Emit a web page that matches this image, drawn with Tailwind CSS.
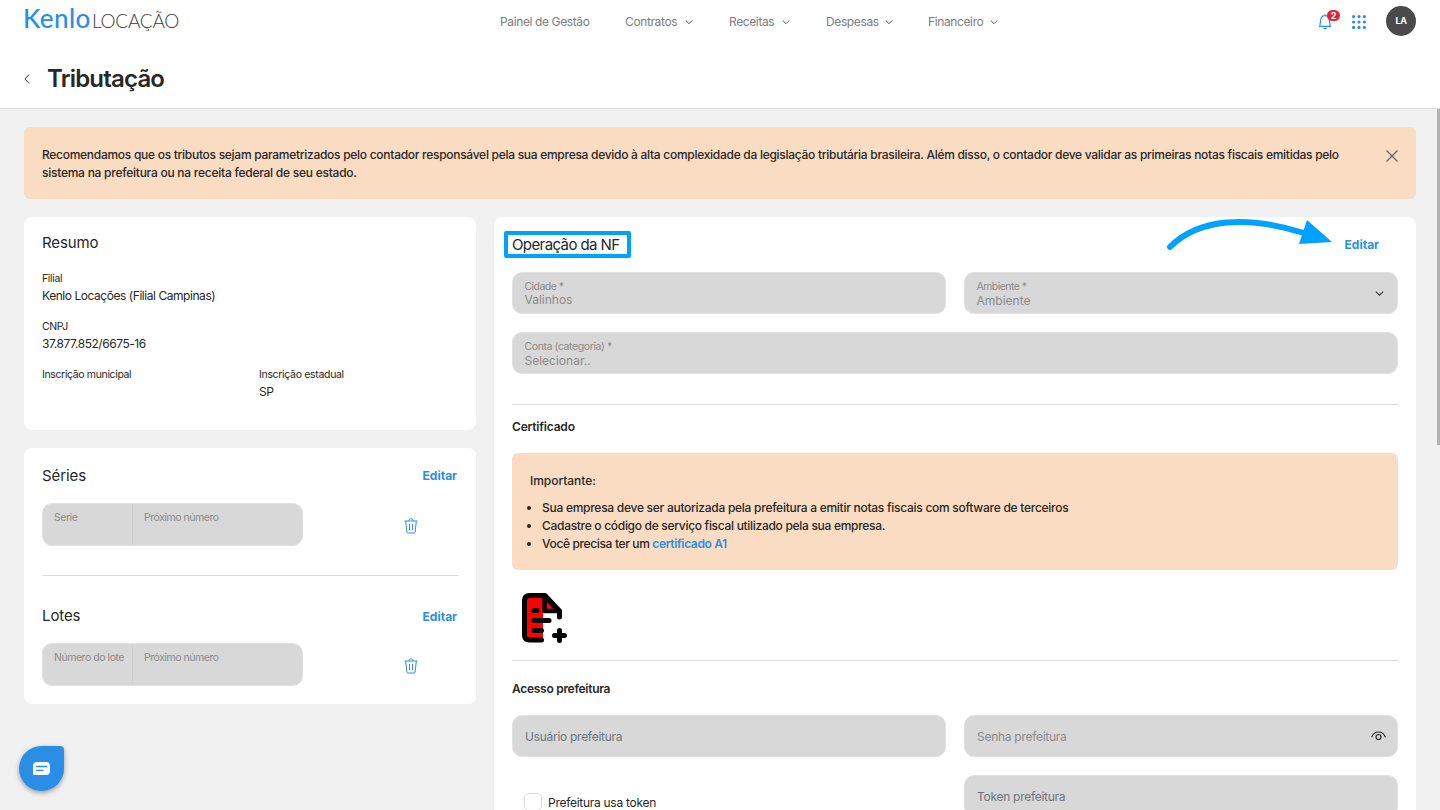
<!DOCTYPE html>
<html lang="pt-BR">
<head>
    <meta charset="UTF-8">
    <meta name="viewport" content="width=device-width, initial-scale=1.0">
    <title>Tributação - Kenlo Locação</title>
    <script src="https://cdn.jsdelivr.net/npm/@tailwindcss/browser@4"></script>
</head>
<body class="h-screen overflow-hidden bg-[#f1f1f1] font-['Inter',sans-serif] text-xs text-[#272727] whitespace-nowrap">

    <header class="h-[109px] bg-white border-b border-[#dfdfdf]">
        <div class="h-[43px] px-6 flex items-center">
            <div class="w-[476px] pb-[7px] flex items-baseline leading-none">
                <span class="w-[69px] -ml-px font-['Lato',sans-serif] font-medium text-[26px] tracking-[0.4px] text-[#2a8ee6]">Kenlo</span>
                <span class="font-['Lato',sans-serif] font-light text-[19px] tracking-[-0.25px] text-[#3c3c3c]">LOCAÇÃO</span>
            </div>
            <nav class="flex items-center text-[#7d7d7d] tracking-[-0.38px]">
                <a class="w-[125px]">Painel de Gestão</a>
                <a class="w-[104px] flex items-center gap-[8px]">Contratos
                    <svg class="w-2 h-2" viewBox="0 0 8 8" fill="none" stroke="#555" stroke-width="1"><path d="M.8 2.5 4 5.7 7.2 2.5"/></svg>
                </a>
                <a class="w-[97px] flex items-center gap-[8px]">Receitas
                    <svg class="w-2 h-2" viewBox="0 0 8 8" fill="none" stroke="#555" stroke-width="1"><path d="M.8 2.5 4 5.7 7.2 2.5"/></svg>
                </a>
                <a class="w-[102px] flex items-center gap-[6px]">Despesas
                    <svg class="w-2 h-2" viewBox="0 0 8 8" fill="none" stroke="#555" stroke-width="1"><path d="M.8 2.5 4 5.7 7.2 2.5"/></svg>
                </a>
                <a class="flex items-center gap-[7px]">Financeiro
                    <svg class="w-2 h-2" viewBox="0 0 8 8" fill="none" stroke="#555" stroke-width="1"><path d="M.8 2.5 4 5.7 7.2 2.5"/></svg>
                </a>
            </nav>
            <div class="ml-auto flex items-center">
                <div class="relative mr-[20px]">
                    <svg class="w-[14px] h-4" viewBox="0 0 14 16" fill="none" stroke="#2a8ee6" stroke-width="1.1"><path d="M.8 12.4h12.4M2 12.2V10c.6-1 .6-2 .6-3.8C2.6 3.3 4.3 1.6 7 1.6s4.4 1.7 4.4 4.6c0 1.8 0 2.8.6 3.8v2.2M7 .3v1.3"/><path d="M5 13.8h4c-.3 1-1 1.7-2 1.7s-1.7-.7-2-1.7z" fill="#2a8ee6" stroke="none"/></svg>
                    <span class="absolute -top-[4px] left-[9px] w-[13px] h-[11px] rounded-full bg-[#d9263a] text-white text-[9px] leading-[11px] font-bold text-center">2</span>
                </div>
                <svg class="w-[14px] h-[14px] mr-[20px]" viewBox="0 0 14 14" fill="#2a8ee6"><circle cx="1.6" cy="1.6" r="1.6"/><circle cx="7" cy="1.6" r="1.6"/><circle cx="12.4" cy="1.6" r="1.6"/><circle cx="1.6" cy="7" r="1.6"/><circle cx="7" cy="7" r="1.6"/><circle cx="12.4" cy="7" r="1.6"/><circle cx="1.6" cy="12.4" r="1.6"/><circle cx="7" cy="12.4" r="1.6"/><circle cx="12.4" cy="12.4" r="1.6"/></svg>
                <span class="w-[30px] h-[30px] -mt-px rounded-full bg-[#4a4a4a] text-white text-[9px] font-bold tracking-[-0.3px] flex items-center justify-center">LA</span>
            </div>
        </div>
        <div class="h-[71px] px-6 flex items-center">
            <svg class="w-[6px] h-[10px] mr-[17px]" viewBox="0 0 6 10" fill="none" stroke="#333" stroke-width="1"><path d="M5 .6 1 5l4 4.4"/></svg>
            <h1 class="text-2xl font-semibold tracking-[-0.8px]">Tributação</h1>
        </div>
    </header>

    <main class="px-6 pt-[18px]">
        <div class="h-[72px] px-[18px] pt-[19px] bg-[#fadcc3] rounded-md flex justify-between leading-[18px]">
            <p class="font-medium tracking-[-0.28px]">Recomendamos que os tributos sejam parametrizados pelo contador responsável pela sua empresa devido à alta complexidade da legislação tributária brasileira. Além disso, o contador deve validar as primeiras notas fiscais emitidas pelo<br><span class="tracking-[-0.25px]">sistema na prefeitura ou na receita federal de seu estado.</span></p>
            <svg class="w-3 h-3 mt-[3.5px]" viewBox="0 0 12 12" fill="none" stroke="#6b5f56" stroke-width="1.2"><path d="M.5.5l11 11M11.5.5l-11 11"/></svg>
        </div>

        <div class="mt-[18px] flex items-start gap-[18px]">
            <div class="w-[452px] flex flex-col gap-[18px]">
                <section class="h-[213px] px-[18px] pt-4 bg-white rounded-lg">
                    <h2 class="text-[15px] leading-5 tracking-[-0.1px]">Resumo</h2>
                    <dl class="mt-[17px] grid grid-cols-[217px_1fr] gap-y-[15px] leading-[15px] tracking-[-0.45px]">
                        <div class="col-span-2">
                            <dt class="text-[10.5px] leading-[18px] tracking-[-0.36px]">Filial</dt>
                            <dd>Kenlo Locações (Filial Campinas)</dd>
                        </div>
                        <div class="col-span-2">
                            <dt class="text-[10.5px] leading-[18px] tracking-[-0.36px]">CNPJ</dt>
                            <dd>37.877.852/6675-16</dd>
                        </div>
                        <div>
                            <dt class="text-[10.5px] leading-[18px] tracking-[-0.36px]">Inscrição municipal</dt>
                        </div>
                        <div>
                            <dt class="text-[10.5px] leading-[18px] tracking-[-0.32px]">Inscrição estadual</dt>
                            <dd>SP</dd>
                        </div>
                    </dl>
                </section>

                <section class="h-[256px] px-[18px] pt-[18px] bg-white rounded-lg">
                    <div class="flex justify-between items-center h-5">
                        <h2 class="text-[15px] tracking-[-0.1px]">Séries</h2>
                        <a class="font-bold text-[#2a8ee6] pr-px">Editar</a>
                    </div>
                    <div class="mt-[17px] flex items-center">
                        <div class="w-[261px] h-[43px] flex bg-[#d8d8d8] border border-[#e2e2e2] rounded-[10px] text-[10.5px] leading-[14px] text-[#8b8b8b] tracking-[-0.46px]">
                            <div class="w-[90px] pl-[11px] pt-[7px] border-r border-[#d0d0d0]">Serie</div>
                            <div class="pl-[11px] pt-[7px]">Próximo número</div>
                        </div>
                        <svg class="ml-[101px] mt-[3px] w-[14px] h-4" viewBox="0 0 14 16" fill="none" stroke="#2a8ee6" stroke-width="1"><path d="M.5 3h13M4.800 2.800c0-1.300.9-2 2.200-2s2.200.7 2.200 2M1.700 3.200 2.900 14c.1.700.5 1 1.100 1h6c.6 0 1-.3 1.100-1l1.200-10.800M5.500 6v6M8.500 6v6"/></svg>
                    </div>
                    <hr class="mt-[29px] border-[#dcdcdc]">
                    <div class="mt-[30px] flex justify-between items-center h-5">
                        <h2 class="text-[15px] tracking-[-0.1px]">Lotes</h2>
                        <a class="font-bold text-[#2a8ee6] pr-px pt-[2px]">Editar</a>
                    </div>
                    <div class="mt-[17px] flex items-center">
                        <div class="w-[261px] h-[43px] flex bg-[#d8d8d8] border border-[#e2e2e2] rounded-[10px] text-[10.5px] leading-[14px] text-[#8b8b8b] tracking-[-0.46px]">
                            <div class="w-[90px] pl-[11px] pt-[7px] border-r border-[#d0d0d0]">Número do lote</div>
                            <div class="pl-[11px] pt-[7px]">Próximo número</div>
                        </div>
                        <svg class="ml-[101px] mt-[3px] w-[14px] h-4" viewBox="0 0 14 16" fill="none" stroke="#2a8ee6" stroke-width="1"><path d="M.5 3h13M4.800 2.800c0-1.300.9-2 2.200-2s2.200.7 2.200 2M1.700 3.200 2.900 14c.1.700.5 1 1.100 1h6c.6 0 1-.3 1.100-1l1.200-10.800M5.500 6v6M8.500 6v6"/></svg>
                    </div>
                </section>
            </div>

            <section class="relative flex-1 px-[18px] pt-[18px] bg-white rounded-lg">
                <div class="flex justify-between items-center h-5">
                    <h2 class="text-[15px] tracking-[-0.6px]">Operação da NF</h2>
                    <a class="font-bold text-[#2a8ee6] pr-[19px]">Editar</a>
                </div>

                <!-- destaque e seta -->
                <div class="absolute left-[10px] top-[14px] w-[127px] h-[27px] border-4 border-[#00a2ff] rounded-[2px]"></div>
                <svg class="absolute left-[672px] top-0 w-[170px] h-[36px]" viewBox="0 0 170 36" fill="none"><path d="M4 30C33 1 82-1.500 138 16" stroke="#00a2ff" stroke-width="6" stroke-linecap="round"/><path d="M141 3l25 22-33 2z" fill="#00a2ff"/></svg>

                <div class="mt-[17px] grid grid-cols-2 gap-[18px] text-[#8b8b8b]">
                    <div class="h-[42px] px-[11.5px] pt-[7px] bg-[#d8d8d8] border border-[#e2e2e2] rounded-[10px] leading-[13px]">
                        <p class="text-[10.5px] tracking-[-0.55px]">Cidade *</p>
                        <p>Valinhos</p>
                    </div>
                    <div class="h-[42px] pl-[11.5px] pr-[13px] pt-px bg-[#d8d8d8] border border-[#e2e2e2] rounded-[10px] flex items-center justify-between leading-[14px]">
                        <div class="pt-px">
                            <p class="text-[10.5px] tracking-[-0.55px]">Ambiente *</p>
                            <p>Ambiente</p>
                        </div>
                        <svg class="w-[9px] h-[9px]" viewBox="0 0 9 9" fill="none" stroke="#333" stroke-width="1.1"><path d="M.8 2.6 4.5 6.2 8.2 2.6"/></svg>
                    </div>
                    <div class="col-span-2 h-[42px] px-[11.5px] pt-[7px] bg-[#d8d8d8] border border-[#e2e2e2] rounded-[10px] leading-[14px]">
                        <p class="text-[10.5px] tracking-[-0.4px]">Conta (categoria) *</p>
                        <p>Selecionar..</p>
                    </div>
                </div>

                <hr class="mt-[30px] border-[#dcdcdc]">
                <h3 class="mt-[13px] leading-[18px] font-semibold tracking-[-0.2px]">Certificado</h3>

                <div class="mt-[17.4px] h-[117px] px-[18px] pt-[18.6px] bg-[#fadcc3] rounded-md leading-[18px] font-medium tracking-[-0.27px]">
                    <p class="tracking-[-0.05px]">Importante:</p>
                    <ul class="mt-[9px] pl-3 list-disc">
                        <li>Sua empresa deve ser autorizada pela prefeitura a emitir notas fiscais com software de terceiros</li>
                        <li class="tracking-[-0.3px]">Cadastre o código de serviço fiscal utilizado pela sua empresa.</li>
                        <li class="tracking-[-0.36px]">Você precisa ter um <a class="font-semibold text-[#2a8ee6]">certificado A1</a></li>
                    </ul>
                </div>

                <svg class="mt-[22px] ml-[9px] w-[48px] h-[52px]" viewBox="0 0 48 52" fill="none" stroke="#000" stroke-width="5" stroke-linecap="round" stroke-linejoin="round">
                    <path d="M23 4H8Q3.500 4 3.500 9v34q0 5 4.500 5h14V25z" fill="red" stroke="none"/>
                    <path d="M23.500 4.500v14.500H38z" fill="red" stroke-width="4.500"/>
                    <path d="M38.500 25v-6L24 3.500H8.500q-5 0-5 5V43q0 5 5 5H20.500"/>
                    <path d="M13 18.500h3M13 28.500h15M13 38.500h7.500M33.500 43.500h10M38.500 38.500v10"/>
                </svg>

                <hr class="mt-[15.600px] border-[#dcdcdc]">
                <h3 class="mt-[19px] leading-[18px] font-semibold tracking-[-0.28px]">Acesso prefeitura</h3>

                <div class="mt-[17px] grid grid-cols-2 gap-[18px] text-[#8b8b8b] tracking-[-0.28px]">
                    <div class="h-[42px] px-[12px] pt-[2px] flex items-center bg-[#d8d8d8] border border-[#e2e2e2] rounded-[10px] text-[#6c757d]">Usuário prefeitura</div>
                    <div class="h-[42px] pl-[12px] pr-[11px] pt-[2px] flex items-center justify-between bg-[#d8d8d8] border border-[#e2e2e2] rounded-[10px]">
                        Senha prefeitura
                        <svg class="w-[15px] h-[10px] -mt-[2px]" viewBox="0 0 15 10" fill="none" stroke="#272727" stroke-width="1.2"><path d="M.6 6.2C1.8 2.8 4.3 1 7.5 1s5.700 1.800 6.900 5.200"/><circle cx="7.5" cy="6" r="2.5"/></svg>
                    </div>
                    <label class="pl-[12px] pt-[18px] flex items-start gap-[6px] leading-[20px] text-[#272727]">
                        <span class="w-[18px] h-[18px] border border-[#dcdcdc] rounded-[5px]"></span>
                        Prefeitura usa token
                    </label>
                    <div class="h-[42px] px-[12px] pt-[2px] flex items-center bg-[#d8d8d8] border border-[#e2e2e2] rounded-[10px] text-[#6c757d]">Token prefeitura</div>
                </div>
            </section>
        </div>
    </main>

    <!-- barra de rolagem -->
    <div class="fixed right-0 top-[109px] w-[3px] h-[336px] bg-[#b3b3b3]"></div>

    <!-- chat -->
    <button class="fixed left-[19px] top-[746px] w-[45px] h-[45px] bg-[#2a8ee6] rounded-[22.5px_4px_22.5px_22.5px] shadow-[0_2px_5px_rgba(0,0,0,0.35)] flex items-center justify-center">
        <svg class="w-[17px] h-[13px]" viewBox="0 0 17 13"><path d="M4 0h9a4 4 0 0 1 4 4v5a4 4 0 0 1-4 4H1a1 1 0 0 1-1-1V4a4 4 0 0 1 4-4z" fill="#fff"/><path d="M3.500 4.500h10M3.500 8.300h6.500" stroke="#2a8ee6" stroke-width="1.300" stroke-linecap="round"/></svg>
    </button>

</body>
</html>
